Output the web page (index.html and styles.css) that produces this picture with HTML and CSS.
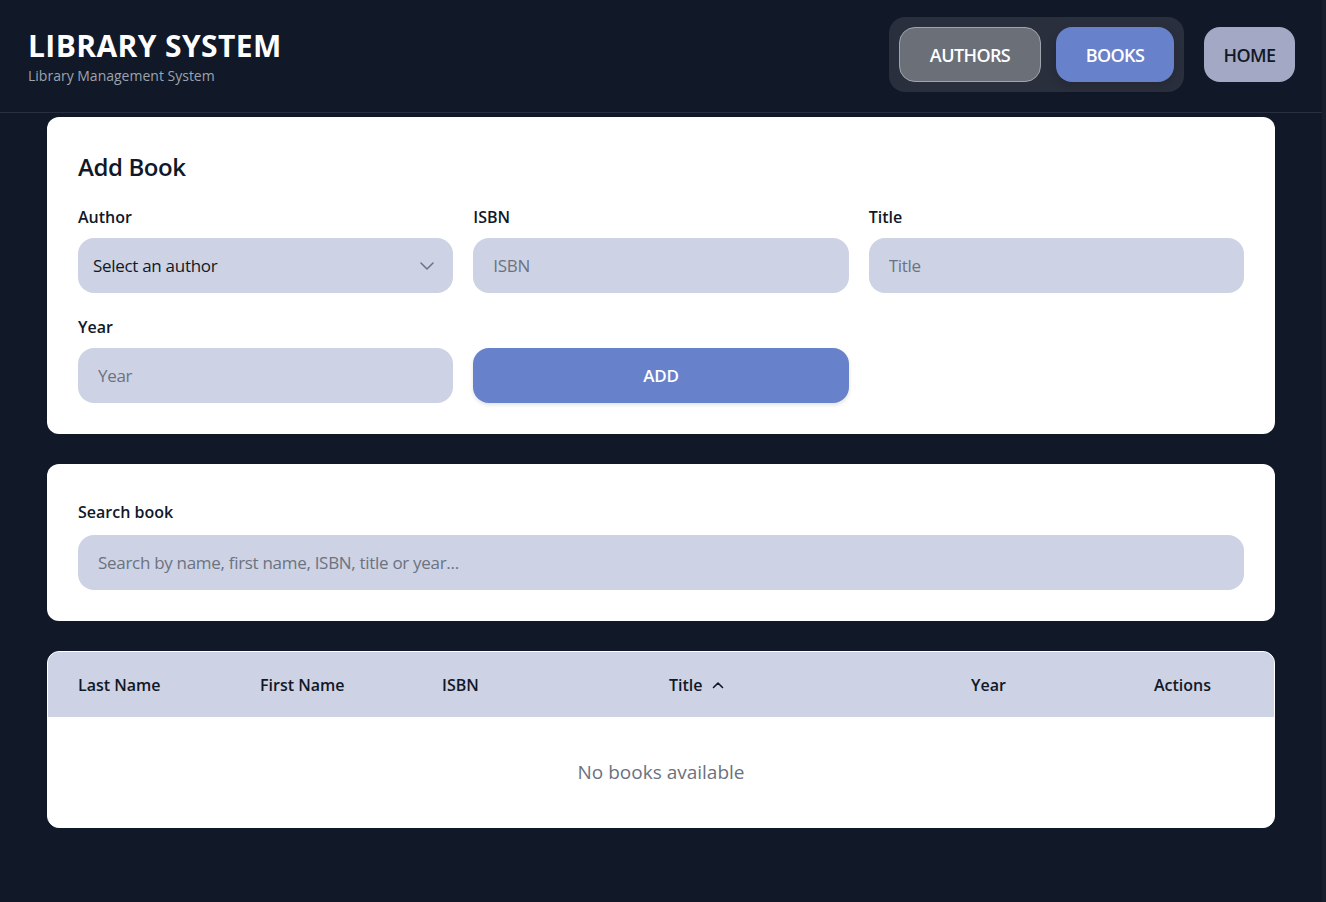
FILE: index.html
```html
<!DOCTYPE html>
<html lang="en">
<head>
<meta charset="utf-8">
<title>Library System</title>
<link rel="stylesheet" href="styles.css">
</head>
<body>
<div class="page">
  <header class="topbar">
    <div class="brand">
      <h1 class="brand-title">LIBRARY SYSTEM</h1>
      <p class="brand-sub">Library Management System</p>
    </div>
    <div class="nav-area">
      <nav class="nav-group">
        <button class="nav-btn nav-authors">AUTHORS</button>
        <button class="nav-btn nav-books">BOOKS</button>
      </nav>
      <button class="nav-btn nav-home">HOME</button>
    </div>
  </header>

  <main class="main">
    <section class="card form-card">
      <h2 class="card-title">Add Book</h2>
      <div class="form-grid">
        <div class="field">
          <label class="label">Author</label>
          <div class="select-wrap">
            <select class="control select">
              <option>Select an author</option>
            </select>
            <svg class="chevron" width="14" height="8" viewBox="0 0 14 8"><path d="M1 1l6 6 6-6" fill="none" stroke="#6b7280" stroke-width="1.5" stroke-linecap="round" stroke-linejoin="round"/></svg>
          </div>
        </div>
        <div class="field">
          <label class="label">ISBN</label>
          <input class="control" placeholder="ISBN">
        </div>
        <div class="field">
          <label class="label">Title</label>
          <input class="control" placeholder="Title">
        </div>
        <div class="field">
          <label class="label">Year</label>
          <input class="control" placeholder="Year">
        </div>
        <div class="field field-btn">
          <button class="add-btn">ADD</button>
        </div>
      </div>
    </section>

    <section class="card search-card">
      <label class="label search-label">Search book</label>
      <input class="control" placeholder="Search by name, first name, ISBN, title or year...">
    </section>

    <section class="card table-card">
      <table class="books">
        <colgroup>
          <col class="c1"><col class="c2"><col class="c3"><col class="c4"><col class="c5"><col class="c6">
        </colgroup>
        <thead>
          <tr>
            <th>Last Name</th>
            <th>First Name</th>
            <th>ISBN</th>
            <th><span class="sort">Title <svg class="sort-icon" width="12" height="8" viewBox="0 0 12 8"><path d="M1.5 6.5L6 2l4.5 4.5" fill="none" stroke="#111827" stroke-width="1.6" stroke-linecap="round" stroke-linejoin="round"/></svg></span></th>
            <th>Year</th>
            <th>Actions</th>
          </tr>
        </thead>
        <tbody>
          <tr>
            <td colspan="6" class="empty">No books available</td>
          </tr>
        </tbody>
      </table>
    </section>
  </main>
</div>
</body>
</html>
```

FILE: styles.css
```css
* { box-sizing: border-box; }

html, body {
  margin: 0;
  padding: 0;
  background: #111827;
}

body {
  font-family: "Open Sans", "Noto Sans", sans-serif;
  color: #111827;
  min-height: 902px;
  border-right: 4px solid #1a1f2b;
}

.page {
  min-height: 902px;
}

.topbar {
  display: flex;
  align-items: center;
  justify-content: space-between;
  padding: 17px 27px 20px 28px;
  border-bottom: 1px solid #283040;
}

.brand {
  padding-top: 4px;
}

.brand-title {
  margin: 0;
  font-size: 30px;
  line-height: 36px;
  font-weight: 700;
  color: #ffffff;
  letter-spacing: 0.4px;
}

.brand-sub {
  margin: 2px 0 0 0;
  font-size: 14px;
  line-height: 20px;
  color: #9ca3af;
}

.nav-area {
  display: flex;
  align-items: center;
  gap: 20px;
}

.nav-group {
  display: flex;
  gap: 15px;
  padding: 10px;
  background: #2a2f3d;
  border-radius: 16px;
}

.nav-btn {
  font-family: inherit;
  height: 55px;
  border: none;
  border-radius: 16px;
  font-size: 18px;
  font-weight: 600;
  letter-spacing: -0.6px;
  cursor: pointer;
}

.nav-authors {
  width: 142px;
  background: #6b6f78;
  border: 1px solid #a0a5ad;
  color: #ffffff;
}

.nav-books {
  width: 118px;
  background: #6781cb;
  color: #ffffff;
  box-shadow: 0 4px 10px rgba(0, 0, 0, 0.15);
}

.nav-home {
  width: 91px;
  background: #a3a9c4;
  color: #111827;
}

.main {
  display: flex;
  flex-direction: column;
  gap: 30px;
  padding: 4px 47px 40px 47px;
}

.card {
  background: #ffffff;
  border-radius: 12px;
}

.form-card {
  padding: 31px;
}

.card-title {
  margin: 3px 0 22px 0;
  font-size: 24px;
  line-height: 32px;
  font-weight: 600;
  color: #111827;
  letter-spacing: -0.4px;
}

.form-grid {
  display: grid;
  grid-template-columns: 1fr 1fr 1fr;
  column-gap: 20px;
  row-gap: 22px;
}

.field {
  display: flex;
  flex-direction: column;
}

.field-btn {
  justify-content: flex-end;
}

.label {
  display: block;
  font-size: 16px;
  line-height: 24px;
  font-weight: 600;
  color: #111827;
  margin-bottom: 9px;
}

.control {
  display: block;
  width: 100%;
  height: 55px;
  border: none;
  border-radius: 16px;
  background: #cdd2e4;
  padding: 0 20px;
  font-family: inherit;
  font-size: 17px;
  color: #1f2937;
  outline: none;
  letter-spacing: -0.3px;
}

.control::placeholder {
  color: #6b7280;
}

.select-wrap {
  position: relative;
}

.select {
  appearance: none;
  -webkit-appearance: none;
  padding-left: 15px;
  color: #111827;
}

.chevron {
  position: absolute;
  right: 19px;
  top: 24px;
  pointer-events: none;
}

.add-btn {
  width: 100%;
  height: 55px;
  border: none;
  border-radius: 16px;
  background: #6781cb;
  color: #ffffff;
  font-family: inherit;
  font-size: 17px;
  font-weight: 600;
  letter-spacing: -0.3px;
  box-shadow: 0 2px 4px rgba(0, 0, 0, 0.12);
  cursor: pointer;
}

.search-card {
  padding: 36px 31px 31px 31px;
}

.search-label {
  margin-bottom: 11px;
}

.table-card {
  overflow: hidden;
  border: 1px solid #ffffff;
}

.books {
  width: 100%;
  border-collapse: collapse;
  table-layout: fixed;
}

.c1 { width: 182px; }
.c2 { width: 182px; }
.c3 { width: 227px; }
.c4 { width: 302px; }
.c5 { width: 183px; }
.c6 { width: auto; }

.books thead tr {
  background: #cdd2e4;
}

.books th {
  text-align: left;
  padding: 21px 0 20px 30px;
  font-size: 16px;
  line-height: 24px;
  font-weight: 600;
  color: #111827;
  white-space: nowrap;
}

.sort {
  display: inline-flex;
  align-items: center;
  gap: 9px;
}

.sort-icon {
  display: block;
}

.empty {
  text-align: center;
  padding: 40px 0;
  line-height: 30px;
  font-size: 19px;
  color: #6b7280;
}
```
